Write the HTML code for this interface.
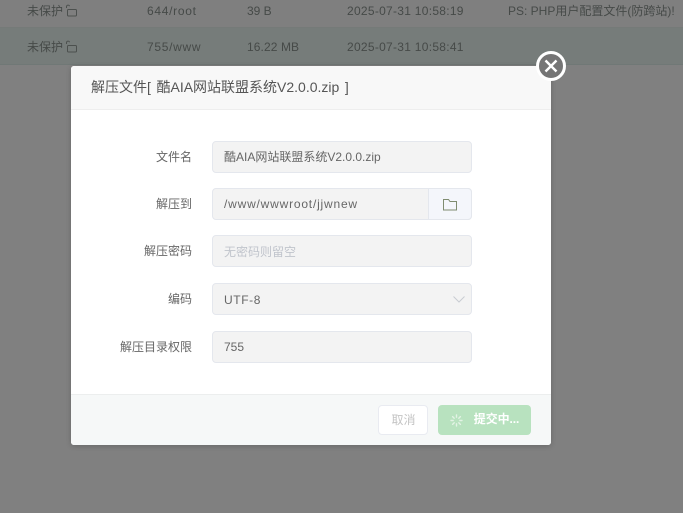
<!DOCTYPE html>
<html lang="zh">
<head>
<meta charset="utf-8">
<style>
html,body{margin:0;padding:0;width:683px;height:513px;overflow:hidden;background:#808080;font-family:"Liberation Sans","Noto Sans CJK SC",sans-serif;font-size:12px}
*{box-sizing:border-box}
.abs{position:absolute;white-space:nowrap}
.row{position:absolute;left:0;width:683px}
.cell{position:absolute;white-space:nowrap;color:#464a48;line-height:16px;font-size:12px}
.modal{position:absolute;left:71px;top:66px;width:480px;height:379px;background:#fff;border-radius:3px;box-shadow:0 1px 6px rgba(0,0,0,.2);overflow:hidden}
.hd{position:absolute;left:0;top:0;width:480px;height:44px;background:#f8f8f8;border-bottom:1px solid #eee;color:#555;font-size:14px;line-height:43px;padding-left:20px;white-space:nowrap;word-spacing:1.7px}
.ft{position:absolute;left:0;top:328px;width:480px;height:51px;background:#f6f8f8;border-top:1px solid #eceeee}
.lb{position:absolute;left:0;width:121px;text-align:right;color:#666;font-size:12px;line-height:16px;white-space:nowrap}
.ip{position:absolute;left:141px;width:260px;height:32px;background:#f3f3f3;border:1px solid #e4e7ed;border-radius:4px;color:#666;font-size:12px;line-height:30px;padding-left:11px;white-space:nowrap}
.ph{color:#c0c4cc;line-height:32px}
.bt{position:absolute;border-radius:4px;text-align:center;white-space:nowrap}
</style>
</head>
<body>
<div class="row" style="top:0;height:28px;background:#7f7f7f;border-bottom:1px solid #757a78"></div>
<div class="row" style="top:28px;height:37px;background:#767c7a;border-bottom:1px solid #707876"></div>

<div class="cell" style="left:27px;top:3px">未保护</div>
<svg class="abs" style="left:64px;top:4px" width="14" height="13" viewBox="0 0 14 13" fill="none" stroke="#4c504e" stroke-width="1"><path d="M2.5 4V2.6A1.6 1.6 0 0 1 5.6 2.2"/><rect x="3.5" y="5.5" width="9" height="6.5" rx="1"/></svg>
<div class="cell" style="left:147px;top:3px;letter-spacing:.7px">644/root</div>
<div class="cell" style="left:247px;top:3px">39 B</div>
<div class="cell" style="left:347px;top:3px;letter-spacing:.28px">2025-07-31 10:58:19</div>
<div class="cell" style="left:508px;top:3px">PS: PHP用户配置文件(防跨站)!</div>

<div class="cell" style="left:27px;top:39px">未保护</div>
<svg class="abs" style="left:64px;top:40px" width="14" height="13" viewBox="0 0 14 13" fill="none" stroke="#4c504e" stroke-width="1"><path d="M2.5 4V2.6A1.6 1.6 0 0 1 5.6 2.2"/><rect x="3.5" y="5.5" width="9" height="6.5" rx="1"/></svg>
<div class="cell" style="left:147px;top:39px;letter-spacing:.7px">755/www</div>
<div class="cell" style="left:247px;top:39px;letter-spacing:.1px">16.22 MB</div>
<div class="cell" style="left:347px;top:39px;letter-spacing:.28px">2025-07-31 10:58:41</div>

<div class="modal">
  <div class="hd">解压文件[ 酷AIA网站联盟系统V2.0.0.zip ]</div>
  <div class="lb" style="top:83px">文件名</div>
  <div class="ip" style="top:75px">酷AIA网站联盟系统V2.0.0.zip</div>
  <div class="lb" style="top:130px">解压到</div>
  <div class="ip" style="top:122px;letter-spacing:.8px">/www/wwwroot/jjwnew</div>
  <div class="abs" style="left:357px;top:122px;width:44px;height:32px;background:#f4f6fb;border:1px solid #e4e7ed;border-radius:0 4px 4px 0"></div>
  <svg class="abs" style="left:371px;top:132px" width="16" height="13" viewBox="0 0 16 13" fill="none" stroke="#7f8c70" stroke-width="1"><path d="M1.5 1.5H6.5L8 3.5H14.5V12H1.5Z"/></svg>
  <div class="lb" style="top:177px">解压密码</div>
  <div class="ip ph" style="top:169px">无密码则留空</div>
  <div class="lb" style="top:225px">编码</div>
  <div class="ip" style="top:217px;line-height:32px;letter-spacing:.6px">UTF-8</div>
  <svg class="abs" style="left:381px;top:229px" width="14" height="9" viewBox="0 0 14 9" fill="none" stroke="#c8ccd2" stroke-width="1"><path d="M1.5 1.5L7 7L12.5 1.5"/></svg>
  <div class="lb" style="top:273px">解压目录权限</div>
  <div class="ip" style="top:265px">755</div>
  <div class="ft"></div>
  <div class="bt" style="left:307px;top:339px;width:50px;height:30px;background:#fff;border:1px solid #e9ebf1;color:#c4c4c4;line-height:28px;padding-left:1px">取消</div>
  <div class="bt" style="left:367px;top:339px;width:93px;height:30px;background:#b8e2bf;color:#fff;line-height:29px;padding-left:24px;font-weight:bold;letter-spacing:-.1px">提交中...</div>
  <svg class="abs" style="left:379px;top:348px" width="13" height="13" viewBox="0 0 13 13" fill="none" stroke="#e3f3e5" stroke-width="1.4" stroke-linecap="round"><path d="M6.5 1V3.2M6.5 9.8V12M1 6.5H3.2M9.8 6.5H12M2.6 2.6L4.2 4.2M8.8 8.8L10.4 10.4M2.6 10.4L4.2 8.8M8.8 4.2L10.4 2.6"/></svg>
</div>

<svg class="abs" style="left:536px;top:51px" width="30" height="30" viewBox="0 0 30 30">
  <circle cx="15" cy="15" r="13.5" fill="#757575" stroke="#fff" stroke-width="3"/>
  <path d="M9.5 9.5L20.5 20.5M20.5 9.5L9.5 20.5" stroke="#fff" stroke-width="2.4" fill="none"/>
</svg>
</body>
</html>
